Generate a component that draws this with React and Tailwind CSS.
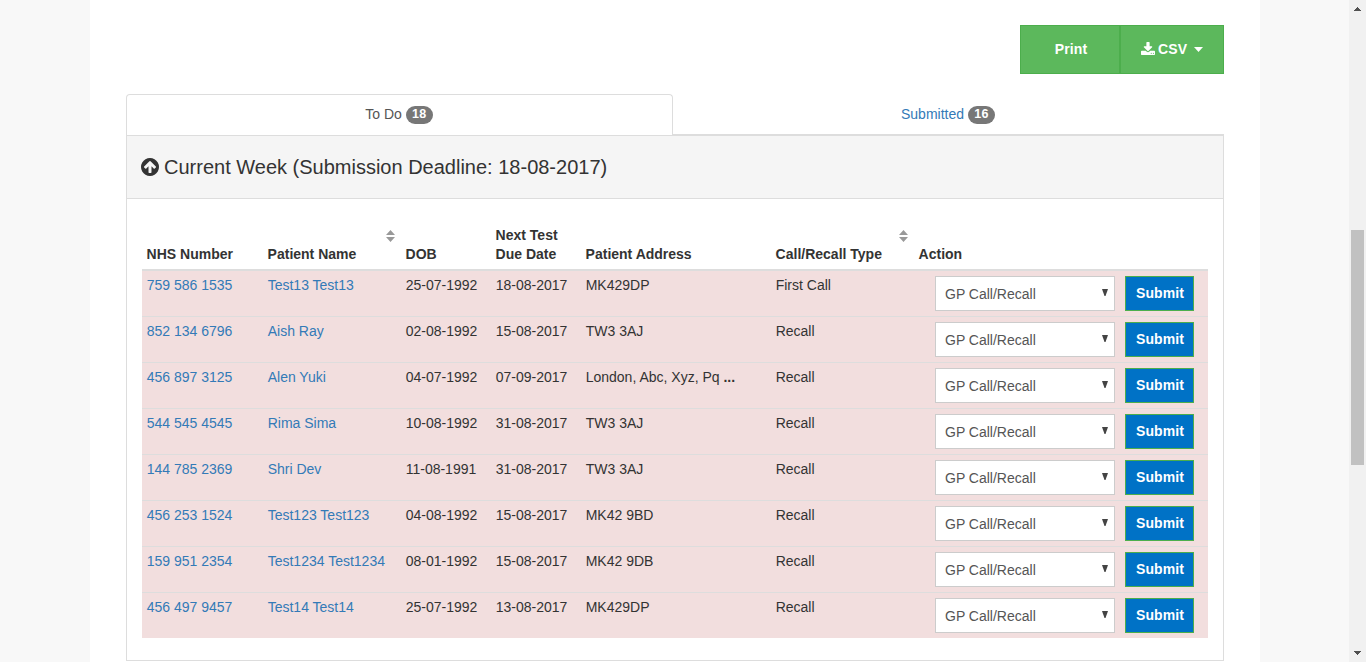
import React from "react";

const rows = [
  ["759 586 1535", "Test13 Test13", "25-07-1992", "18-08-2017", "MK429DP", "First Call"],
  ["852 134 6796", "Aish Ray", "02-08-1992", "15-08-2017", "TW3 3AJ", "Recall"],
  ["456 897 3125", "Alen Yuki", "04-07-1992", "07-09-2017", "London, Abc, Xyz, Pq", "Recall"],
  ["544 545 4545", "Rima Sima", "10-08-1992", "31-08-2017", "TW3 3AJ", "Recall"],
  ["144 785 2369", "Shri Dev", "11-08-1991", "31-08-2017", "TW3 3AJ", "Recall"],
  ["456 253 1524", "Test123 Test123", "04-08-1992", "15-08-2017", "MK42 9BD", "Recall"],
  ["159 951 2354", "Test1234 Test1234", "08-01-1992", "15-08-2017", "MK42 9DB", "Recall"],
  ["456 497 9457", "Test14 Test14", "25-07-1992", "13-08-2017", "MK429DP", "Recall"],
];

const columns = "grid grid-cols-[121px_138px_90px_90px_190px_143px_294px]";

function Badge({ children }) {
  return (
    <span className="ml-1 mt-px flex h-[18px] w-[27px] items-center justify-center rounded-full bg-[#777] pt-px text-[12.5px] font-bold tracking-[0.3px] text-white">
      {children}
    </span>
  );
}

function SortIcon() {
  return (
    <svg className="mr-[6px] mt-[4px] h-[12px] w-[9px]" viewBox="0 0 9 12" fill="#999">
      <path d="M0 5 4.500 0 9 5zM0 7h9l-4.500 5z" />
    </svg>
  );
}

function HeaderCell({ children, sortable }) {
  return (
    <div className="flex items-end justify-between pb-[5px] pl-[4.6px]">
      <span>{children}</span>
      {sortable && (
        <span className="flex h-[38px] items-start">
          <SortIcon />
        </span>
      )}
    </div>
  );
}

function Row({ row, first }) {
  const [nhs, name, dob, due, address, type] = row;
  return (
    <div
      className={
        columns +
        " bg-[#f2dede] leading-5 " +
        (first ? "h-[45px] pt-[4px]" : "h-[46px] border-t border-[#ddd] pt-[4px]")
      }
    >
      <a className="pl-[4.7px] text-[#337ab7]">{nhs}</a>
      <a className="pl-[4.7px] text-[#337ab7]">{name}</a>
      <span className="pl-[4.7px]">{dob}</span>
      <span className="pl-[4.7px]">{due}</span>
      <span className="pl-[4.7px]">
        {address}
        {address.startsWith("London") && <b> ...</b>}
      </span>
      <span className="pl-[4.7px]">{type}</span>
      <div className="flex items-start gap-[10px] pl-[21px] pt-px">
        <div className="flex h-[35px] w-[180px] items-center justify-between border border-[#ccc] bg-white pl-[9px] pr-[6px] text-[#555]">
          <span>GP Call/Recall</span>
          <svg className="mb-[2px] h-[7px] w-[6px]" viewBox="0 0 6 7" fill="#444">
            <path d="M0 0h6L3.500 7h-1z" />
          </svg>
        </div>
        <button className="h-[35px] w-[69px] border border-[#4cae4c] bg-[#0072c6] pb-[2px] pl-px font-bold tracking-[0.1px] text-white">
          Submit
        </button>
      </div>
    </div>
  );
}

function Scrollbar() {
  return (
    <div className="flex w-[17px] flex-col items-center justify-between bg-[#f1f1f1]">
      <div className="flex h-[18px] items-center">
        <svg className="h-[4px] w-[7px]" viewBox="0 0 7 4" fill="#505050" shapeRendering="crispEdges">
          <path d="M3 0h1v1h1v1h1v1h1v1H0V3h1V2h1V1h1z" />
        </svg>
      </div>
      <div className="flex w-full flex-1 flex-col items-center pt-[212px]">
        <div className="h-[235px] w-[13px] bg-[#c1c1c1]" />
      </div>
      <div className="flex h-[18px] items-center">
        <svg className="h-[4px] w-[7px]" viewBox="0 0 7 4" fill="#505050" shapeRendering="crispEdges">
          <path d="M0 0h7v1H6v1H5v1H4v1H3V3H2V2H1V1H0z" />
        </svg>
      </div>
    </div>
  );
}

export default function App() {
  return (
    <div className="flex h-[662px] w-[1366px] overflow-hidden bg-[#f8f8f8] font-['Liberation_Sans',Arial,sans-serif] text-sm text-[#333]">
      <main className="ml-[90px] mr-[89px] w-[1170px] bg-white px-[36px] pt-[25px]">
        <div className="flex justify-end font-bold text-white">
          <button className="h-[49px] w-[100px] border border-[#4cae4c] bg-[#5cb85c] pb-[2px] pl-[2px] tracking-[0.1px]">
            Print
          </button>
          <button className="flex h-[49px] w-[104px] items-center border border-[#4cae4c] bg-[#5cb85c] pb-[2px] pl-[20px]">
            <svg className="mb-px h-[13px] w-[14px]" viewBox="0 0 1664 1536" fill="currentColor">
              <path d="M1280 1344q0-26-19-45t-45-19-45 19-19 45 19 45 45 19 45-19 19-45zm256 0q0-26-19-45t-45-19-45 19-19 45 19 45 45 19 45-19 19-45zm128-224v320q0 40-28 68t-68 28h-1472q-40 0-68-28t-28-68v-320q0-40 28-68t68-28h465l135 136q58 56 136 56t136-56l136-136h464q40 0 68 28t28 68zm-325-569q17 41-14 70l-448 448q-18 19-45 19t-45-19l-448-448q-31-29-14-70 17-39 59-39h256v-448q0-26 19-45t45-19h256q26 0 45 19t19 45v448h256q42 0 59 39z" />
            </svg>
            <span className="ml-[3px] tracking-[0.15px]">CSV</span>
            <svg className="ml-[7px] mt-px h-[5px] w-[9px]" viewBox="0 0 9 5" fill="currentColor">
              <path d="M0 0h9L4.500 5z" />
            </svg>
          </button>
        </div>

        <div className="mt-[20px] flex h-[41px] w-[1098px]">
          <div className="flex w-[547px] items-center justify-center rounded-t border border-b-0 border-[#ddd] pb-[2px] pr-px text-[#555]">
            To Do<Badge>18</Badge>
          </div>
          <div className="flex flex-1 items-center justify-center border-b border-[#ddd] pr-px text-[#337ab7]">
            Submitted<Badge>16</Badge>
          </div>
        </div>

        <section className="h-[526px] border border-[#ddd] bg-white">
          <h2 className="flex h-[63px] items-center border-b border-[#ddd] bg-[#f5f5f5] pl-[14px] text-xl">
            <svg className="mr-[5px] h-[18px] w-[18px]" viewBox="0 0 1536 1536" fill="currentColor">
              <path d="M1284 767q0-27-18-45l-362-362-91-91q-18-18-45-18t-45 18l-91 91-362 362q-18 18-18 45t18 45l91 91q18 18 45 18t45-18l189-189v502q0 26 19 45t45 19h128q26 0 45-19t19-45v-502l189 189q19 19 45 19t45-19l91-91q18-18 18-45zm252 1q0 209-103 385.500t-279.500 279.500-385.500 103-385.500-103-279.500-279.500-103-385.500 103-385.500 279.500-279.500 385.500-103 385.500 103 279.500 279.500 103 385.500z" />
            </svg>
            Current Week (Submission Deadline: 18-08-2017)
          </h2>
          <div className="px-[15px] pt-[15px]">
            <div className={columns + " h-[57px] w-[1066px] border-b-2 border-[#ddd] font-bold leading-[19px]"}>
              <HeaderCell>NHS Number</HeaderCell>
              <HeaderCell sortable>Patient Name</HeaderCell>
              <HeaderCell>DOB</HeaderCell>
              <HeaderCell>
                Next Test
                <br />
                Due Date
              </HeaderCell>
              <HeaderCell>Patient Address</HeaderCell>
              <HeaderCell sortable>Call/Recall Type</HeaderCell>
              <HeaderCell>Action</HeaderCell>
            </div>
            <div className="w-[1066px]">
              {rows.map((row, i) => (
                <Row key={row[0]} row={row} first={i === 0} />
              ))}
            </div>
          </div>
        </section>
      </main>
      <Scrollbar />
    </div>
  );
}
